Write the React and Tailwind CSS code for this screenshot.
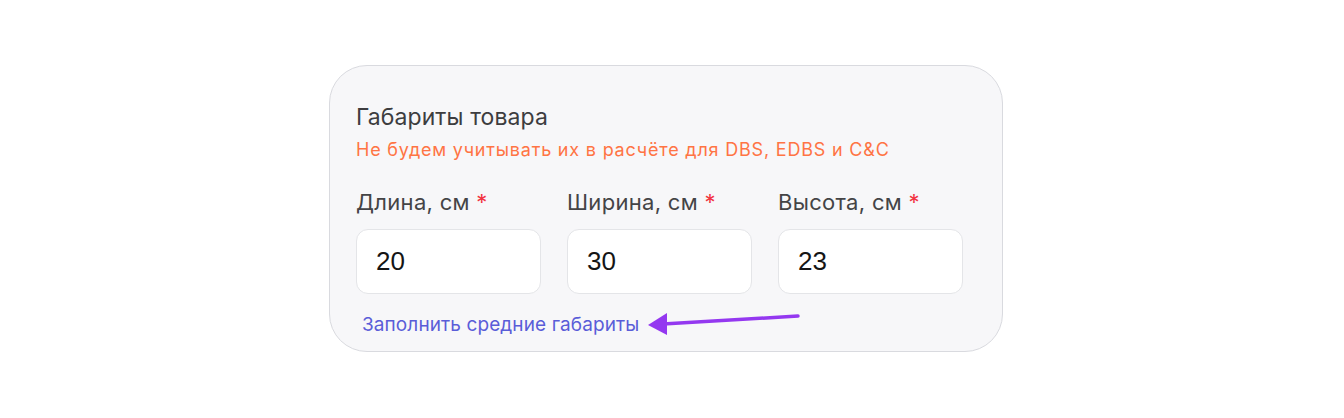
export default function App() {
  const fields = [
    { label: "Длина, см", value: "20" },
    { label: "Ширина, см", value: "30" },
    { label: "Высота, см", value: "23" },
  ];

  return (
    <div
      className="w-[1344px] h-[418px] bg-white pl-[329px] pt-[65px]"
      style={{ fontFamily: "Inter, 'Noto Sans', sans-serif" }}
    >
      <div className="w-[674px] h-[287px] rounded-[38px] border border-[#d9dadf] bg-[#f7f7f9] pl-[26px] pt-[37px]">
        <h3 className="text-[23px] leading-[28px] text-[#3d3d3f] tracking-[0.1px]">
          Габариты товара
        </h3>
        <p className="mt-[7px] text-[18px] leading-[24px] text-[#ff7444] tracking-[0.8px]">
          Не будем учитывать их в расчёте для DBS, EDBS и C&amp;C
        </p>

        <div className="mt-[26px] flex gap-[26px]">
          {fields.map((f) => (
            <div key={f.label} className="w-[185px]">
              <label className="block text-[22px] leading-[28px] text-[#444446] tracking-[0.3px]">
                {f.label} <span className="text-[#f2333f]">*</span>
              </label>
              <div className="mt-[13px] h-[65px] rounded-[12px] border border-[#e4e5e8] bg-white flex items-center pl-[19px]">
                <span
                  className="text-[26px] text-[#151515]"
                  style={{ fontFamily: "'Liberation Sans', Arial, sans-serif" }}
                >
                  {f.value}
                </span>
              </div>
            </div>
          ))}
        </div>

        <div className="mt-[19px] flex items-center pl-[6px]">
          <a className="text-[19px] leading-[24px] text-[#5a5dd8] tracking-[0.1px] cursor-pointer">
            Заполнить средние габариты
          </a>
          <svg
            width="156"
            height="26"
            viewBox="0 0 156 26"
            className="ml-[8px] -mt-[4px]"
          >
            <path d="M16 14 L151 6" stroke="#9438f0" strokeWidth="3.5" strokeLinecap="round" />
            <path d="M1 15 L20 3 L20 25 Z" fill="#9438f0" strokeLinejoin="round" />
          </svg>
        </div>
      </div>
    </div>
  );
}
